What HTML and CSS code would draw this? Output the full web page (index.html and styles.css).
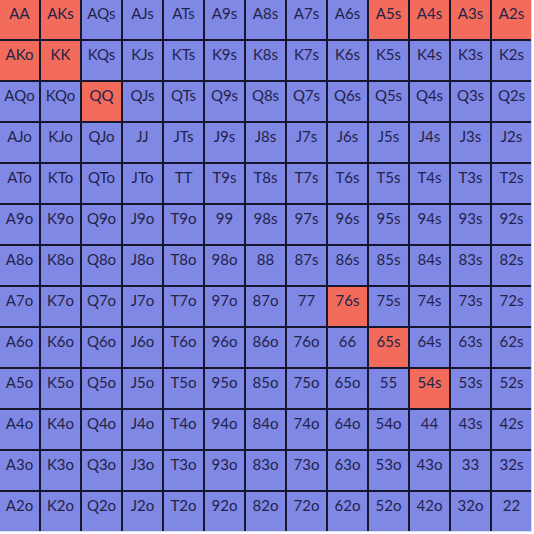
FILE: index.html
```html
<!DOCTYPE html>
<html lang="en">
<head>
  <meta charset="UTF-8" />
  <title>Preflop Range</title>
  <link rel="stylesheet" href="styles.css">
</head>
<body>
  <div class="range">
    <div class="hand raise">AA</div><div class="hand raise">AKs</div><div class="hand">AQs</div><div class="hand">AJs</div><div class="hand">ATs</div><div class="hand">A9s</div><div class="hand">A8s</div><div class="hand">A7s</div><div class="hand">A6s</div><div class="hand raise">A5s</div><div class="hand raise">A4s</div><div class="hand raise">A3s</div><div class="hand raise">A2s</div>
    <div class="hand raise">AKo</div><div class="hand raise">KK</div><div class="hand">KQs</div><div class="hand">KJs</div><div class="hand">KTs</div><div class="hand">K9s</div><div class="hand">K8s</div><div class="hand">K7s</div><div class="hand">K6s</div><div class="hand">K5s</div><div class="hand">K4s</div><div class="hand">K3s</div><div class="hand">K2s</div>
    <div class="hand">AQo</div><div class="hand">KQo</div><div class="hand raise">QQ</div><div class="hand">QJs</div><div class="hand">QTs</div><div class="hand">Q9s</div><div class="hand">Q8s</div><div class="hand">Q7s</div><div class="hand">Q6s</div><div class="hand">Q5s</div><div class="hand">Q4s</div><div class="hand">Q3s</div><div class="hand">Q2s</div>
    <div class="hand">AJo</div><div class="hand">KJo</div><div class="hand">QJo</div><div class="hand">JJ</div><div class="hand">JTs</div><div class="hand">J9s</div><div class="hand">J8s</div><div class="hand">J7s</div><div class="hand">J6s</div><div class="hand">J5s</div><div class="hand">J4s</div><div class="hand">J3s</div><div class="hand">J2s</div>
    <div class="hand">ATo</div><div class="hand">KTo</div><div class="hand">QTo</div><div class="hand">JTo</div><div class="hand">TT</div><div class="hand">T9s</div><div class="hand">T8s</div><div class="hand">T7s</div><div class="hand">T6s</div><div class="hand">T5s</div><div class="hand">T4s</div><div class="hand">T3s</div><div class="hand">T2s</div>
    <div class="hand">A9o</div><div class="hand">K9o</div><div class="hand">Q9o</div><div class="hand">J9o</div><div class="hand">T9o</div><div class="hand">99</div><div class="hand">98s</div><div class="hand">97s</div><div class="hand">96s</div><div class="hand">95s</div><div class="hand">94s</div><div class="hand">93s</div><div class="hand">92s</div>
    <div class="hand">A8o</div><div class="hand">K8o</div><div class="hand">Q8o</div><div class="hand">J8o</div><div class="hand">T8o</div><div class="hand">98o</div><div class="hand">88</div><div class="hand">87s</div><div class="hand">86s</div><div class="hand">85s</div><div class="hand">84s</div><div class="hand">83s</div><div class="hand">82s</div>
    <div class="hand">A7o</div><div class="hand">K7o</div><div class="hand">Q7o</div><div class="hand">J7o</div><div class="hand">T7o</div><div class="hand">97o</div><div class="hand">87o</div><div class="hand">77</div><div class="hand raise">76s</div><div class="hand">75s</div><div class="hand">74s</div><div class="hand">73s</div><div class="hand">72s</div>
    <div class="hand">A6o</div><div class="hand">K6o</div><div class="hand">Q6o</div><div class="hand">J6o</div><div class="hand">T6o</div><div class="hand">96o</div><div class="hand">86o</div><div class="hand">76o</div><div class="hand">66</div><div class="hand raise">65s</div><div class="hand">64s</div><div class="hand">63s</div><div class="hand">62s</div>
    <div class="hand">A5o</div><div class="hand">K5o</div><div class="hand">Q5o</div><div class="hand">J5o</div><div class="hand">T5o</div><div class="hand">95o</div><div class="hand">85o</div><div class="hand">75o</div><div class="hand">65o</div><div class="hand">55</div><div class="hand raise">54s</div><div class="hand">53s</div><div class="hand">52s</div>
    <div class="hand">A4o</div><div class="hand">K4o</div><div class="hand">Q4o</div><div class="hand">J4o</div><div class="hand">T4o</div><div class="hand">94o</div><div class="hand">84o</div><div class="hand">74o</div><div class="hand">64o</div><div class="hand">54o</div><div class="hand">44</div><div class="hand">43s</div><div class="hand">42s</div>
    <div class="hand">A3o</div><div class="hand">K3o</div><div class="hand">Q3o</div><div class="hand">J3o</div><div class="hand">T3o</div><div class="hand">93o</div><div class="hand">83o</div><div class="hand">73o</div><div class="hand">63o</div><div class="hand">53o</div><div class="hand">43o</div><div class="hand">33</div><div class="hand">32s</div>
    <div class="hand">A2o</div><div class="hand">K2o</div><div class="hand">Q2o</div><div class="hand">J2o</div><div class="hand">T2o</div><div class="hand">92o</div><div class="hand">82o</div><div class="hand">72o</div><div class="hand">62o</div><div class="hand">52o</div><div class="hand">42o</div><div class="hand">32o</div><div class="hand">22</div>
  </div>
</body>
</html>
```

FILE: styles.css
```css
body {
  margin: 0;
  background-color: #ffffff;
  font-family: Lato, "Open Sans", sans-serif;
}

.range {
  display: grid;
  grid-template-columns: repeat(13, 1fr);
  grid-template-rows: repeat(13, 1fr);
  gap: 2px;
  width: 531px;
  height: 531px;
  background-color: #16162e;
  border-right: 1px solid #d8d8e8;
  border-bottom: 1px solid #d8d8e8;
}

.hand {
  background-color: #8088e6;
  color: #23234a;
  font-size: 15px;
  text-align: center;
  padding-top: 4px;
}

.hand.raise {
  background-color: #f26b5b;
}
```
